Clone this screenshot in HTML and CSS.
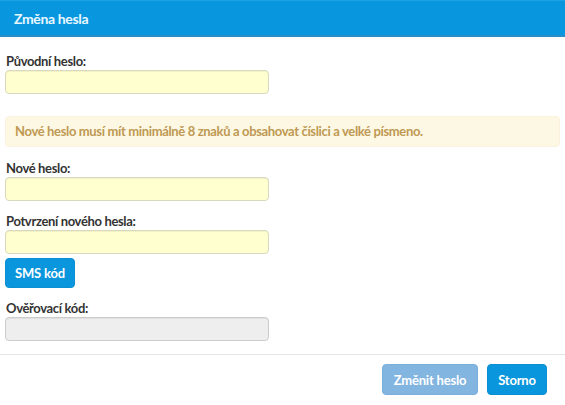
FILE: index.html
```html
<!DOCTYPE html>
<html lang="cs">
<head>
<meta charset="utf-8">
<title>Změna hesla</title>
<link rel="stylesheet" href="styles.css">
</head>
<body>
<div class="modal">
    <div class="modal-header">Změna hesla</div>
    <div class="modal-body">
        <label class="lbl">Původní heslo:</label>
        <input class="inp" type="password">

        <div class="alert">Nové heslo musí mít minimálně 8 znaků a obsahovat číslici a velké písmeno.</div>

        <label class="lbl">Nové heslo:</label>
        <input class="inp" type="password">

        <label class="lbl lbl-gap">Potvrzení nového hesla:</label>
        <input class="inp" type="password">

        <button class="btn btn-sms" type="button">SMS kód</button>

        <label class="lbl lbl-gap">Ověřovací kód:</label>
        <input class="inp inp-off" type="text" disabled>
    </div>
    <div class="modal-footer">
        <button class="btn btn-off btn-save" type="button">Změnit heslo</button>
        <button class="btn btn-cancel" type="button">Storno</button>
    </div>
</div>
</body>
</html>
```
FILE: styles.css
```css
body {margin:0; padding:0; background:#fff; font:13px Lato, "Noto Sans", sans-serif; color:#333; letter-spacing:-0.35px;}
.modal {width:565px; height:405px; display:flex; flex-direction:column;}

.modal-header {
    height:37px;
    box-sizing:border-box;
    padding-left:14px;
    line-height:35px;
    font-weight:bold;
    font-size:14px;
    color:#e9f7ff;
    background:#0897df;
    border-top:1px solid #1ea2e6;
    border-bottom:2px solid #2b8dc6;
}

.modal-body {padding:15px 5px 13px 5px; display:flex; flex-direction:column; align-items:flex-start;}

.lbl {display:block; line-height:18px; height:18px; font-weight:bold; padding-left:1px;}
.lbl-gap {margin-top:11px;}

.inp {
    width:264px; height:24px; box-sizing:border-box; margin:0;
    background:#ffffcf;
    border:1px solid #d9d9c0;
    border-radius:4px;
    box-shadow:inset 0 1px 1px rgba(0,0,0,0.06);
}
.inp-off {background:#eeeeee; border-color:#cccccc;}

.alert {
    align-self:stretch;
    margin:22px 0 12px 0;
    padding:7px 10px 7px 9px;
    line-height:15px;
    font-weight:bold;
    color:#c09853;
    background:#fcf8e3;
    border:1px solid #fbf1dc;
    border-radius:4px;
}

.btn {
    height:31px; padding:0; margin:0;
    font:bold 13px Lato, "Noto Sans", sans-serif;
    letter-spacing:-0.2px;
    color:#fff;
    background:#0a96dc;
    border:1px solid #0a8fd2;
    border-radius:4px;
}
.btn-sms {height:30px; width:70px; margin-top:4px;}
.btn-save {width:96px;}
.btn-cancel {width:60px;}
.btn-off {background:#82b5df; border-color:#7aaedb;}

.modal-footer {
    border-top:1px solid #e5e5e5;
    padding:9px 18px 10px 0;
    display:flex; justify-content:flex-end; gap:9px;
}
```
